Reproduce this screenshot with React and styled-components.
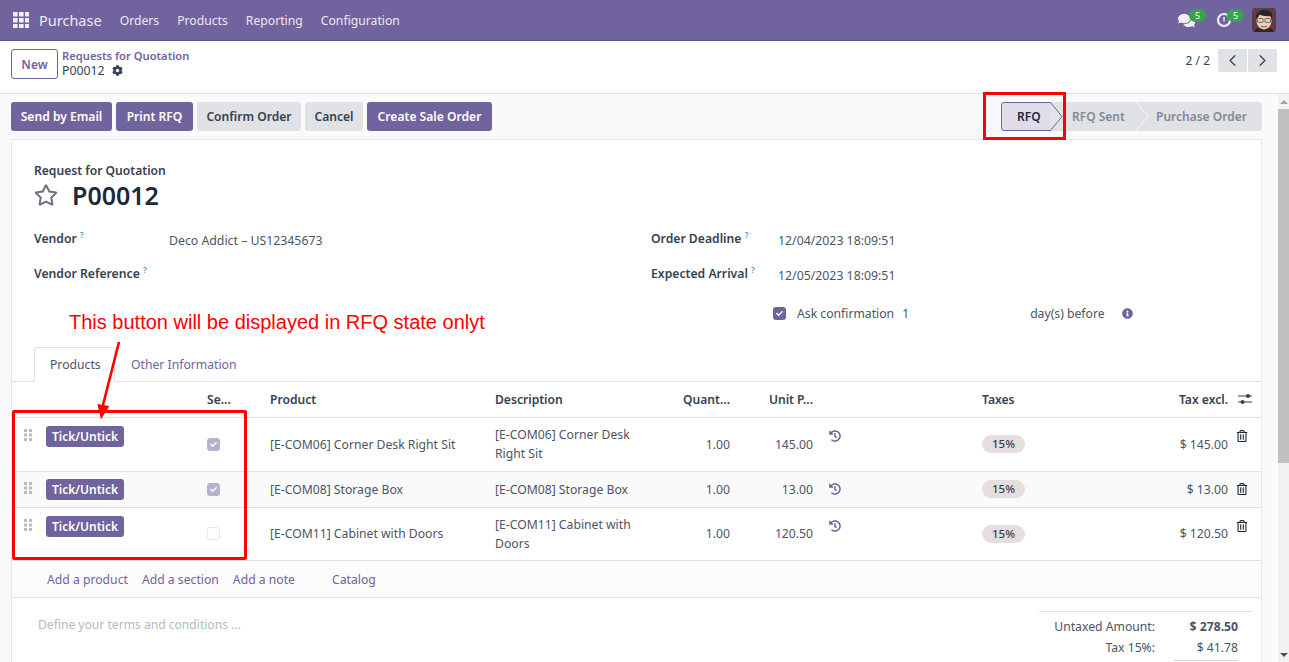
import React from "react";
import styled, { createGlobalStyle } from "styled-components";
import { FaCog, FaRegStar, FaComments, FaHistory, FaRegTrashAlt, FaInfoCircle, FaCheck } from "react-icons/fa";
import { LuChevronLeft, LuChevronRight } from "react-icons/lu";

const lines = [
    {
        id: 1,
        product: "[E-COM06] Corner Desk Right Sit",
        desc: "[E-COM06] Corner Desk Right Sit",
        unit: "145.00",
        total: "$ 145.00",
        checked: true,
        height: 54,
        top: 8,
    },
    {
        id: 2,
        product: "[E-COM08] Storage Box",
        desc: "[E-COM08] Storage Box",
        unit: "13.00",
        total: "$ 13.00",
        checked: true,
        height: 36,
        top: 7,
        shaded: true,
    },
    {
        id: 3,
        product: "[E-COM11] Cabinet with Doors",
        desc: "[E-COM11] Cabinet with Doors",
        unit: "120.50",
        total: "$ 120.50",
        checked: false,
        height: 53,
        top: 8,
    },
];

const columns = [28, 159, 63, 225, 165, 86, 83, 153, 100, 162, 25];

export default function App() {
    return (
        <>
            <GlobalStyle />
            <Page>
                <NavBar>
                    <NavLeft>
                        <AppsIcon />
                        <Brand>Purchase</Brand>
                        <NavLink>Orders</NavLink>
                        <NavLink>Products</NavLink>
                        <NavLink>Reporting</NavLink>
                        <NavLink>Configuration</NavLink>
                    </NavLeft>
                    <NavRight>
                        <Systray $width={38}>
                            <FaComments size={17} color="#f1eff6" />
                            <Badge>5</Badge>
                        </Systray>
                        <Systray $width={36}>
                            <ClockIcon />
                            <Badge>5</Badge>
                        </Systray>
                        <Avatar />
                    </NavRight>
                </NavBar>

                <ControlPanel>
                    <ControlLeft>
                        <NewButton>New</NewButton>
                        <Breadcrumb>
                            <CrumbLink>Requests for Quotation</CrumbLink>
                            <CrumbCurrent>
                                P00012 <FaCog size={11} color="#374151" />
                            </CrumbCurrent>
                        </Breadcrumb>
                    </ControlLeft>
                    <Pager>
                        <span>2 / 2</span>
                        <PagerGroup>
                            <PagerButton>
                                <LuChevronLeft size={19} strokeWidth={1.6} />
                            </PagerButton>
                            <PagerButton>
                                <LuChevronRight size={19} strokeWidth={1.6} />
                            </PagerButton>
                        </PagerGroup>
                    </Pager>
                </ControlPanel>

                <Body>
                    <Content>
                        <ActionBar>
                            <Actions>
                                <ActionButton $primary $width={101}>
                                    Send by Email
                                </ActionButton>
                                <ActionButton $primary $width={77}>
                                    Print RFQ
                                </ActionButton>
                                <ActionButton $width={104}>Confirm Order</ActionButton>
                                <ActionButton $width={58}>Cancel</ActionButton>
                                <ActionButton $primary $width={125}>
                                    Create Sale Order
                                </ActionButton>
                            </Actions>
                            <StatusBar>
                                <CurrentStep>
                                    RFQ
                                    <StepArrow viewBox="0 0 13 29" width="13" height="29">
                                        <path d="M0 0 L12 14.5 L0 29" fill="#e5e2ee" stroke="#71639e" />
                                    </StepArrow>
                                </CurrentStep>
                                <Step $width={85} $pad={21}>
                                    RFQ Sent
                                    <StepArrow viewBox="0 0 13 29" width="13" height="29">
                                        <path d="M0 0 L12 14.5 L0 29" fill="none" stroke="#f5f6f7" />
                                    </StepArrow>
                                </Step>
                                <Step $width={126} $pad={20}>
                                    Purchase Order
                                </Step>
                            </StatusBar>
                        </ActionBar>

                        <Sheet>
                            <Head>
                                <Caption>Request for Quotation</Caption>
                                <TitleRow>
                                    <FaRegStar size={24} color="#6b7280" />
                                    <Title>P00012</Title>
                                </TitleRow>
                            </Head>

                            <FormGrid>
                                <FormColumn>
                                    <Field>
                                        <FieldLabel $width={135}>
                                            Vendor <Help>?</Help>
                                        </FieldLabel>
                                        <FieldValue>Deco Addict – US12345673</FieldValue>
                                    </Field>
                                    <Field>
                                        <FieldLabel $width={135}>
                                            Vendor Reference <Help>?</Help>
                                        </FieldLabel>
                                    </Field>
                                </FormColumn>
                                <FormColumn>
                                    <Field>
                                        <FieldLabel $width={127}>
                                            Order Deadline <Help>?</Help>
                                        </FieldLabel>
                                        <FieldValue>12/04/2023 18:09:51</FieldValue>
                                    </Field>
                                    <Field>
                                        <FieldLabel $width={127}>
                                            Expected Arrival <Help>?</Help>
                                        </FieldLabel>
                                        <FieldValue>12/05/2023 18:09:51</FieldValue>
                                    </Field>
                                    <ConfirmRow>
                                        <BigCheck>
                                            <FaCheck size={7} color="#fff" />
                                        </BigCheck>
                                        <ConfirmLabel $gap={8}>Ask confirmation</ConfirmLabel>
                                        <ConfirmDays>1</ConfirmDays>
                                        <ConfirmLabel $gap={17}>day(s) before</ConfirmLabel>
                                        <FaInfoCircle size={11} color="#71639e" />
                                    </ConfirmRow>
                                </FormColumn>
                            </FormGrid>

                            <Note>This button will be displayed in RFQ state onlyt</Note>

                            <Tabs>
                                <Tab $active>Products</Tab>
                                <Tab>Other Information</Tab>
                            </Tabs>

                            <Lines>
                                <colgroup>
                                    {columns.map((width, i) => (
                                        <col key={i} width={width} />
                                    ))}
                                </colgroup>
                                <thead>
                                    <tr>
                                        <HeadCell />
                                        <HeadCell />
                                        <HeadCell>Se...</HeadCell>
                                        <HeadCell>Product</HeadCell>
                                        <HeadCell>Description</HeadCell>
                                        <HeadCell $right>Quant...</HeadCell>
                                        <HeadCell $right>Unit P...</HeadCell>
                                        <HeadCell />
                                        <HeadCell>Taxes</HeadCell>
                                        <HeadCell $right>Tax excl.</HeadCell>
                                        <HeadCell $flush>
                                            <AdjustIcon />
                                        </HeadCell>
                                    </tr>
                                </thead>
                                <tbody>
                                    {lines.map((line) => (
                                        <Row key={line.id} $height={line.height} $shaded={line.shaded}>
                                            <TopCell $top={line.top}>
                                                <Handle />
                                            </TopCell>
                                            <TopCell $top={line.top}>
                                                <TickButton>Tick/Untick</TickButton>
                                            </TopCell>
                                            <Cell>
                                                <LineCheck $checked={line.checked}>
                                                    {line.checked && <FaCheck size={7} color="#fff" />}
                                                </LineCheck>
                                            </Cell>
                                            <Cell>{line.product}</Cell>
                                            <Cell>
                                                <Desc>{line.desc}</Desc>
                                            </Cell>
                                            <Cell $right>1.00</Cell>
                                            <Cell $right>{line.unit}</Cell>
                                            <IconCell $top={line.top + 4}>
                                                <FaHistory size={12} color="#71639e" />
                                            </IconCell>
                                            <Cell>
                                                <TaxTag>15%</TaxTag>
                                            </Cell>
                                            <Cell $right>{line.total}</Cell>
                                            <IconCell $top={line.top + 4} $flush>
                                                <FaRegTrashAlt size={12} color="#1f2937" />
                                            </IconCell>
                                        </Row>
                                    ))}
                                    <AddRow>
                                        <td colSpan={11}>
                                            <AddLinks>
                                                <AddLink>Add a product</AddLink>
                                                <AddLink>Add a section</AddLink>
                                                <AddLink>Add a note</AddLink>
                                                <CatalogLink>Catalog</CatalogLink>
                                            </AddLinks>
                                        </td>
                                    </AddRow>
                                </tbody>
                            </Lines>

                            <Footer>
                                <Terms>Define your terms and conditions ...</Terms>
                                <Totals>
                                    <TotalRow>
                                        <TotalLabel>Untaxed Amount:</TotalLabel>
                                        <TotalValue $bold>$ 278.50</TotalValue>
                                    </TotalRow>
                                    <TotalRow>
                                        <TotalLabel>Tax 15%:</TotalLabel>
                                        <TotalValue>$ 41.78</TotalValue>
                                    </TotalRow>
                                    <TotalRule />
                                </Totals>
                            </Footer>

                            <Arrow viewBox="0 0 40 80" width="40" height="80">
                                <path d="M22 1 L6 64" stroke="#f00" strokeWidth="2.6" fill="none" />
                                <path d="M0.3 63 L12.3 65 L4 78.3 Z" fill="#f00" />
                            </Arrow>
                            <TickFrame />
                        </Sheet>
                    </Content>
                    <Scrollbar>
                        <ScrollArrow $up />
                        <ScrollThumb />
                        <ScrollArrow />
                    </Scrollbar>
                    <StepFrame />
                </Body>
            </Page>
        </>
    );
}

function AppsIcon() {
    const cells = [];
    for (let row = 0; row < 3; row++) {
        for (let col = 0; col < 3; col++) {
            cells.push(<rect key={`${row}-${col}`} x={col * 6} y={row * 6} width="4.6" height="4.6" rx="0.5" />);
        }
    }
    return (
        <svg width="16" height="16" viewBox="0 0 16 16" fill="#f3f1f8">
            {cells}
        </svg>
    );
}

function ClockIcon() {
    return (
        <svg width="16" height="16" viewBox="0 0 16 16" fill="none" stroke="#f1eff6">
            <circle cx="8" cy="8" r="6" strokeWidth="2.2" />
            <path d="M8 5 V9.5" strokeWidth="1.4" />
        </svg>
    );
}

function Avatar() {
    return (
        <svg width="24" height="24" viewBox="0 0 24 24">
            <rect width="24" height="24" rx="3" fill="#5f3b47" />
            <path d="M2 24 C3 20 8 19 12 19 C16 19 21 20 22 24 Z" fill="#33272c" />
            <ellipse cx="12" cy="13" rx="7.5" ry="8.5" fill="#f3cdb0" />
            <path d="M4 11 C3 4 9 1.5 13 2 C19 2 21 6 20 11 L18.5 8 C14 8.5 10 8 7.5 6.5 C7 8.5 6 9.5 4 11 Z" fill="#2a2224" />
            <rect x="5.5" y="10.5" width="5.6" height="3.8" rx="0.8" fill="#d9d8d2" stroke="#444" strokeWidth="0.8" />
            <rect x="12.9" y="10.5" width="5.6" height="3.8" rx="0.8" fill="#d9d8d2" stroke="#444" strokeWidth="0.8" />
            <path d="M9 18 Q12 20 15 18" stroke="#a04a3e" strokeWidth="1" fill="none" />
        </svg>
    );
}

function AdjustIcon() {
    return (
        <AdjustSvg width="14" height="12" viewBox="0 0 14 12" fill="#374151">
            <rect x="0" y="2.5" width="14" height="1" />
            <rect x="0" y="8.5" width="14" height="1" />
            <circle cx="10" cy="3" r="2" />
            <circle cx="4.5" cy="9" r="2" />
        </AdjustSvg>
    );
}

function Handle() {
    const dots = [];
    for (let row = 0; row < 3; row++) {
        for (let col = 0; col < 2; col++) {
            dots.push(<rect key={`${row}-${col}`} x={col * 5} y={row * 4.5} width="3" height="3" />);
        }
    }
    return (
        <HandleSvg width="8" height="12" viewBox="0 0 8 12" fill="#b5bcc6">
            {dots}
        </HandleSvg>
    );
}

const GlobalStyle = createGlobalStyle`
    html, body {
        margin: 0;
        height: 100%;
        overflow: hidden;
    }
    body {
        font-family: "Noto Sans", "Liberation Sans", sans-serif;
        font-size: 12px;
        color: #374151;
    }
    * {
        box-sizing: border-box;
    }
`;

const Page = styled.div`
    height: 662px;
    display: flex;
    flex-direction: column;
    overflow: hidden;
`;

const NavBar = styled.div`
    height: 41px;
    flex: none;
    display: flex;
    align-items: center;
    justify-content: space-between;
    padding: 0 13px 0 13px;
    background: #71639e;
    border-bottom: 1px solid #5f5386;
    color: #ece9f3;
`;

const NavLeft = styled.div`
    display: flex;
    align-items: center;
`;

const Brand = styled.span`
    font-size: 14.5px;
    margin: 0 18px 0 10px;
`;

const NavLink = styled.span`
    font-size: 12.2px;
    margin-right: 18px;
`;

const NavRight = styled.div`
    display: flex;
    align-items: center;
`;

const Systray = styled.div`
    position: relative;
    width: ${(p) => p.$width}px;
    height: 20px;
    display: flex;
    align-items: center;
`;

const Badge = styled.span`
    position: absolute;
    left: 11px;
    top: -1px;
    width: 17px;
    height: 13px;
    border-radius: 7px;
    background: #3aa349;
    color: #fff;
    font-size: 9px;
    line-height: 13px;
    text-align: center;
`;

const ControlPanel = styled.div`
    height: 53px;
    flex: none;
    display: flex;
    justify-content: space-between;
    padding: 8px 12px 0 11px;
    background: #fff;
    border-bottom: 1px solid #dee2e6;
`;

const ControlLeft = styled.div`
    display: flex;
    align-items: flex-start;
    gap: 4px;
`;

const NewButton = styled.button`
    width: 47px;
    height: 30px;
    padding: 0;
    background: #fff;
    border: 1px solid #71639e;
    border-radius: 3px;
    color: #71639e;
    font: 600 12px "Noto Sans", sans-serif;
`;

const Breadcrumb = styled.div`
    display: flex;
    flex-direction: column;
    margin-top: -1px;
    line-height: 15px;
`;

const CrumbLink = styled.span`
    color: #71639e;
    font-size: 11.2px;
    font-weight: 600;
`;

const CrumbCurrent = styled.span`
    display: flex;
    align-items: center;
    gap: 7px;
    font-size: 12.3px;
`;

const Pager = styled.div`
    display: flex;
    align-items: flex-start;
    gap: 8px;
    font-size: 12px;
    line-height: 23px;
`;

const PagerGroup = styled.div`
    display: flex;
    gap: 1px;
`;

const PagerButton = styled.div`
    width: 29px;
    height: 23px;
    display: flex;
    align-items: center;
    justify-content: center;
    background: #e0e2e6;
    border-radius: 2px;
    color: #374151;
`;

const Body = styled.div`
    position: relative;
    flex: 1;
    min-height: 0;
    display: flex;
    background: #f9fafb;
`;

const Content = styled.div`
    flex: 1;
    min-width: 0;
    padding: 8px 16px 0 11px;
    overflow: hidden;
`;

const ActionBar = styled.div`
    display: flex;
    justify-content: space-between;
    height: 29px;
    margin-bottom: 8px;
`;

const Actions = styled.div`
    display: flex;
    gap: 4px;
`;

const ActionButton = styled.button`
    width: ${(p) => p.$width}px;
    height: 29px;
    padding: 0;
    border: 0;
    border-radius: 3px;
    background: ${(p) => (p.$primary ? "#71639e" : "#e0e2e6")};
    color: ${(p) => (p.$primary ? "#fff" : "#374151")};
    font: 600 12.1px "Noto Sans", sans-serif;
    white-space: nowrap;
`;

const StatusBar = styled.div`
    display: flex;
    align-items: center;
    width: 261px;
    height: 29px;
    background: #e0e2e6;
    border-radius: 3px;
`;

const CurrentStep = styled.div`
    position: relative;
    width: 50px;
    flex: none;
    height: 29px;
    line-height: 27px;
    padding-left: 15px;
    background: #e0dde9;
    border: 1px solid #71639e;
    border-radius: 3px 0 0 3px;
    color: #1f2937;
    font-size: 12px;
    font-weight: 600;
`;

const Step = styled.div`
    position: relative;
    width: ${(p) => p.$width}px;
    flex: none;
    padding-left: ${(p) => p.$pad}px;
    color: #838a95;
    font-size: 12px;
    font-weight: 600;
    line-height: 29px;
    white-space: nowrap;
`;

const StepArrow = styled.svg`
    position: absolute;
    top: -1px;
    right: -13px;
    z-index: 1;
    ${Step} > & {
        top: 0;
    }
`;

const StepFrame = styled.div`
    position: absolute;
    left: 983px;
    top: -2px;
    width: 83px;
    height: 48px;
    border: 3px solid #f00;
`;

const Sheet = styled.div`
    position: relative;
    height: 640px;
    background: #fff;
    border: 1px solid #e5e7eb;
    border-bottom: 0;
    padding-top: 23px;
`;

const Head = styled.div`
    padding-left: 22px;
`;

const Caption = styled.div`
    font-size: 12.1px;
    font-weight: 600;
    line-height: 16px;
`;

const TitleRow = styled.div`
    display: flex;
    align-items: center;
    gap: 14px;
    height: 31px;
`;

const Title = styled.h1`
    margin: 0;
    color: #1f2937;
    font-size: 25px;
    font-weight: 600;
`;

const FormGrid = styled.div`
    display: grid;
    grid-template-columns: 617px 1fr;
    padding: 12px 0 0 22px;
    height: 137px;
`;

const FormColumn = styled.div`
    display: flex;
    flex-direction: column;
`;

const Field = styled.div`
    display: flex;
    align-items: center;
    height: 35px;
`;

const FieldLabel = styled.div`
    width: ${(p) => p.$width}px;
    padding-bottom: 2px;
    font-size: 12.2px;
    font-weight: 600;
    white-space: nowrap;
`;

const Help = styled.sup`
    color: #3b9dc2;
    font-size: 8px;
`;

const FieldValue = styled.div`
    padding-top: 2px;
    color: #4b5563;
    font-size: 12.3px;
`;

const ConfirmRow = styled.div`
    display: flex;
    align-items: center;
    margin: 11px 0 0 122px;
    height: 20px;
`;

const BigCheck = styled.span`
    width: 13px;
    height: 13px;
    margin-right: 11px;
    display: flex;
    align-items: center;
    justify-content: center;
    background: #71639e;
    border-radius: 3px;
`;

const ConfirmLabel = styled.span`
    color: #4b5563;
    font-size: 12.2px;
    margin-right: ${(p) => p.$gap}px;
`;

const ConfirmDays = styled.span`
    width: 128px;
    color: #4b5563;
    font-size: 12px;
`;

const Note = styled.div`
    position: absolute;
    left: 57px;
    top: 171px;
    color: #f00;
    font: 20px "Liberation Sans", Arial, sans-serif;
    white-space: nowrap;
`;

const Tabs = styled.div`
    display: flex;
    height: 35px;
    padding-left: 22px;
    border-bottom: 1px solid #dee2e6;
`;

const Tab = styled.div`
    width: ${(p) => (p.$active ? "81px" : "auto")};
    height: ${(p) => (p.$active ? "35px" : "34px")};
    padding: 0 15px;
    line-height: 34px;
    font-size: 12.2px;
    text-align: center;
    white-space: nowrap;
    color: ${(p) => (p.$active ? "#4b5563" : "#71639e")};
    background: #fff;
    border: 1px solid ${(p) => (p.$active ? "#dee2e6" : "transparent")};
    border-bottom: 0;
    border-radius: 3px 3px 0 0;
`;

const Lines = styled.table`
    width: 100%;
    table-layout: fixed;
    border-collapse: collapse;
    font-size: 12.2px;
`;

const HeadCell = styled.th`
    height: 35px;
    padding: ${(p) => (p.$flush ? 0 : "0 8px")};
    text-align: ${(p) => (p.$right ? "right" : "left")};
    font-size: 12.1px;
    font-weight: 600;
    white-space: nowrap;
    overflow: hidden;
    border-bottom: 1px solid #dee2e6;
`;

const Row = styled.tr`
    height: ${(p) => p.$height}px;
    background: ${(p) => (p.$shaded ? "#fafafa" : "#fff")};
    border-bottom: 1px solid #dee2e6;
`;

const Cell = styled.td`
    padding: 0 8px;
    text-align: ${(p) => (p.$right ? "right" : "left")};
    vertical-align: middle;
    color: #4b5563;
    overflow: hidden;
    white-space: nowrap;
`;

const TopCell = styled.td`
    padding: ${(p) => p.$top}px 8px 0;
    vertical-align: top;
`;

const IconCell = styled(TopCell)`
    padding-left: ${(p) => (p.$flush ? 0 : "8px")};
    padding-right: 0;
    line-height: 0;
`;

const HandleSvg = styled.svg`
    display: block;
    margin: 3px 0 0 4px;
`;

const AdjustSvg = styled.svg`
    display: block;
    margin-left: 2px;
`;

const TickButton = styled.div`
    width: 78px;
    height: 21px;
    line-height: 21px;
    margin-left: -2px;
    text-align: center;
    background: #71639e;
    border-radius: 3px;
    color: #fff;
    font-size: 12px;
    font-weight: 600;
    white-space: nowrap;
`;

const LineCheck = styled.span`
    display: flex;
    align-items: center;
    justify-content: center;
    width: 13px;
    height: 13px;
    background: ${(p) => (p.$checked ? "#b8b1ce" : "#fff")};
    border: 1px solid ${(p) => (p.$checked ? "#b8b1ce" : "#e5e7eb")};
    border-radius: 3px;
`;

const Desc = styled.div`
    white-space: normal;
    line-height: 19px;
`;

const TaxTag = styled.span`
    display: inline-block;
    width: 43px;
    height: 18px;
    line-height: 18px;
    text-align: center;
    background: #e6dedc;
    border-radius: 9px;
    color: #374151;
    font-size: 11.5px;
    font-weight: 500;
`;

const AddRow = styled.tr`
    height: 37px;
    background: #fbfbfc;
    border-bottom: 1px solid #dee2e6;
`;

const AddLinks = styled.div`
    display: flex;
    padding: 1px 0 0 34px;
    gap: 14px;
`;

const AddLink = styled.span`
    color: #71639e;
`;

const CatalogLink = styled(AddLink)`
    margin-left: 23px;
`;

const Footer = styled.div`
    display: flex;
    justify-content: space-between;
    padding: 13px 8px 0 26px;
`;

const Terms = styled.div`
    color: #b4b9c1;
    font-size: 12.1px;
    padding-top: 5px;
`;

const Totals = styled.div`
    width: 214px;
    padding: 4px 15px 0 0;
    border-top: 1px solid #dee2e6;
    font-size: 12.2px;
`;

const TotalRow = styled.div`
    display: flex;
    justify-content: flex-end;
    height: 21px;
    line-height: 21px;
`;

const TotalLabel = styled.span`
    color: #4b5563;
`;

const TotalValue = styled.span`
    width: 83px;
    text-align: right;
    color: #4b5563;
    font-weight: ${(p) => (p.$bold ? 700 : 400)};
`;

const TotalRule = styled.div`
    width: 64px;
    margin: 2px 0 0 auto;
    border-top: 1px solid #d1d5db;
`;

const Arrow = styled.svg`
    position: absolute;
    left: 85px;
    top: 201px;
`;

const TickFrame = styled.div`
    position: absolute;
    left: 0;
    top: 270px;
    width: 235px;
    height: 150px;
    border: 3px solid #f00;
    border-radius: 2px;
`;

const Scrollbar = styled.div`
    width: 11px;
    flex: none;
    display: flex;
    flex-direction: column;
    background: #f1f1f1;
`;

const ScrollArrow = styled.div`
    height: 15px;
    flex: none;
    margin-top: ${(p) => (p.$up ? 0 : "auto")};
    display: flex;
    align-items: center;
    justify-content: center;
    &::before {
        content: "";
        border-left: 4px solid transparent;
        border-right: 4px solid transparent;
        ${(p) => (p.$up ? "border-bottom: 4px solid #a3a3a3;" : "border-top: 4px solid #505050;")}
    }
`;

const ScrollThumb = styled.div`
    height: 354px;
    background: #c1c1c1;
`;
